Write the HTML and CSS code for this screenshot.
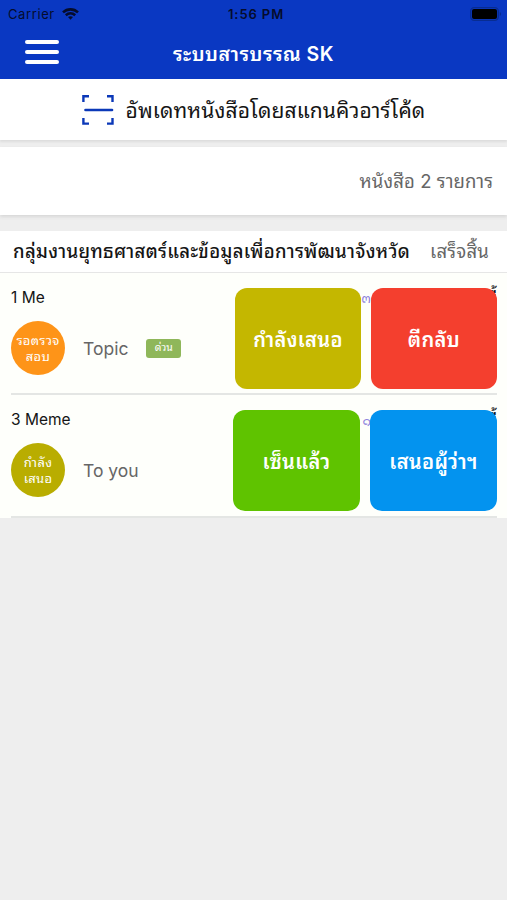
FILE: index.html
```
<!DOCTYPE html>
<html lang="th">
  <head>
    <meta charset="UTF-8" />
    <meta name="viewport" content="width=device-width, initial-scale=1.0" />
    <title>ระบบสารบรรณ SK</title>
    <link rel="stylesheet" href="styles.css" />
  </head>
  <body>
    <header>
      <div class="status-bar">
        <div class="carrier">
          <span>Carrier</span>
          <svg width="17" height="12" viewBox="0 0 17 12" fill="none" stroke="#050c2c" stroke-width="2.6">
            <path d="M1 4.4C5.3.4 11.7.4 16 4.4" />
            <path d="M3.8 7.2c2.8-2.4 6.6-2.4 9.4 0" />
            <path d="M6 9l2.5 2.7L11 9C9.5 7.9 7.5 7.9 6 9z" fill="#050c2c" stroke="none" />
          </svg>
        </div>
        <div class="time">1:56 PM</div>
        <svg class="battery" width="32" height="14" viewBox="0 0 32 14">
          <rect x=".7" y=".7" width="27.6" height="12.6" rx="3.5" fill="none" stroke="#082c91" stroke-width="1.3" />
          <rect x="2" y="2" width="25" height="10" rx="2" fill="#000" />
          <path d="M29.8 5v4c1.7-.6 1.7-3.4 0-4z" fill="#082c91" />
        </svg>
      </div>
      <div class="nav-bar">
        <button class="menu"><span></span><span></span><span></span></button>
        <h1>ระบบสารบรรณ SK</h1>
      </div>
    </header>

    <div class="scan">
      <svg width="32" height="30" viewBox="0 0 32 30" fill="none" stroke="#0b38b8" stroke-width="2.4">
        <path d="M1.4 7V1.3H7M25 1.3h5.5V7M30.5 23v5.6H25M7 28.6H1.400V23" />
        <path d="M3.500 15h26.500" stroke-width="2.6" stroke-linecap="round" />
      </svg>
      <span class="scan-text">อัพเดทหนังสือโดยสแกนคิวอาร์โค้ด</span>
    </div>

    <div class="summary"><span class="count">หนังสือ 2 รายการ</span></div>

    <section>
      <div class="group">
        <h2>กลุ่มงานยุทธศาสตร์และข้อมูลเพื่อการพัฒนาจังหวัด</h2>
        <span class="done">เสร็จสิ้น</span>
      </div>

      <div class="item">
        <div class="item-head">
          <span class="sender">1 Me</span>
          <span class="number">๑๓</span>
          <span class="date">วันนี้</span>
        </div>
        <div class="item-body">
          <div class="status orange">รอตรวจ<br />สอบ</div>
          <span class="topic">Topic</span>
          <span class="urgent">ด่วน</span>
        </div>
        <div class="actions">
          <button class="action olive">กำลังเสนอ</button>
          <button class="action red">ตีกลับ</button>
        </div>
      </div>

      <div class="item">
        <div class="item-head">
          <span class="sender">3 Meme</span>
          <span class="number">๑</span>
          <span class="date">วันนี้</span>
        </div>
        <div class="item-body">
          <div class="status dark-olive">กำลัง<br />เสนอ</div>
          <span class="topic">To you</span>
        </div>
        <div class="actions wide">
          <button class="action green">เซ็นแล้ว</button>
          <button class="action blue">เสนอผู้ว่าฯ</button>
        </div>
      </div>
    </section>
  </body>
</html>
```
FILE: styles.css
```
* {
  box-sizing: border-box;
}
body {
  margin: 0;
  background-color: #eee;
  color: #151515;
  font-family: Inter, "Noto Sans Thai Looped", "Noto Looped Thai", Loma, Garuda,
    Waree, Thonburi, sans-serif;
}
h1,
h2 {
  margin: 0;
}
button {
  border: 0;
  padding: 0;
  font-family: inherit;
}
header {
  height: 79px;
  background-color: #0a38c2;
}
.status-bar {
  display: grid;
  grid-template-columns: 1fr auto 1fr;
  align-items: center;
  height: 27px;
  padding: 0 5px 0 8px;
  color: #050c2c;
  font-size: 13px;
}
.carrier {
  display: flex;
  align-items: center;
  gap: 7px;
  letter-spacing: 0.6px;
}
.time {
  padding-left: 2px;
  font-weight: 600;
  letter-spacing: 0.9px;
}
.battery {
  justify-self: end;
}
.nav-bar {
  display: grid;
  grid-template-columns: 60px 1fr 60px;
  align-items: center;
  height: 50px;
}
.menu {
  display: flex;
  flex-direction: column;
  gap: 6px;
  width: 34px;
  margin-left: 25px;
  background: none;
}
.menu span {
  height: 4px;
  border-radius: 2px;
  background-color: #fff;
}
h1 {
  color: #fff;
  font-size: 19.5px;
  font-weight: 600;
  letter-spacing: 0.5px;
  text-align: center;
}
.scan {
  display: flex;
  justify-content: center;
  align-items: center;
  gap: 12px;
  height: 61px;
  background-color: #fff;
  box-shadow: 0 2px 2px #ddd;
  font-size: 21px;
  letter-spacing: 0.1px;
  white-space: nowrap;
}
.scan-text {
  padding-bottom: 3px;
}
.summary {
  display: flex;
  justify-content: flex-end;
  align-items: center;
  height: 68px;
  margin-top: 7px;
  padding: 0 14px 4px 0;
  background-color: #fff;
  box-shadow: 0 2px 3px #d8d8d8;
  color: #666;
  font-size: 18.5px;
  letter-spacing: 0.1px;
}
section {
  margin-top: 16px;
  background-color: #fefffb;
}
.group {
  display: flex;
  justify-content: space-between;
  align-items: center;
  height: 42px;
  padding: 0 18px 4px 13px;
  border-bottom: 1px solid #e6e6e6;
  background-color: #fff;
  white-space: nowrap;
}
h2 {
  font-size: 18.5px;
  font-weight: 500;
  letter-spacing: 0.33px;
}
.done {
  color: #666;
  font-size: 18.5px;
  letter-spacing: 0.2px;
}
.item {
  position: relative;
  height: 122px;
  margin: 0 10px 0 11px;
  border-bottom: 2px solid #e4e6e4;
}
.item:last-child {
  height: 123px;
}
.item-head {
  display: flex;
  height: 48px;
  padding-top: 12px;
  font-size: 15.5px;
  line-height: 26px;
}
.number {
  margin-left: auto;
  color: #8b80dc;
  font-size: 13px;
}
.date {
  width: 126px;
  margin-top: -1px;
  font-size: 16px;
  font-weight: 500;
  text-align: right;
}
.item-body {
  display: flex;
  align-items: center;
}
.status {
  display: flex;
  justify-content: center;
  align-items: center;
  width: 54px;
  height: 54px;
  border-radius: 50%;
  color: #fff;
  font-size: 13px;
  letter-spacing: 0.3px;
  line-height: 16px;
  text-align: center;
}
.topic {
  margin-left: 18px;
  color: #666;
  font-size: 17.5px;
}
.urgent {
  width: 35px;
  height: 19px;
  margin-left: 18px;
  border-radius: 3px;
  background-color: #8fb75a;
  color: #fff;
  font-size: 10.5px;
  line-height: 18px;
  text-align: center;
}
.actions {
  display: flex;
  gap: 10px;
  position: absolute;
  top: 15px;
  right: 0;
  width: 262px;
}
.wide {
  width: 264px;
}
.action {
  flex: 1;
  height: 101px;
  padding-bottom: 2px;
  border-radius: 12px;
  color: #fff;
  font-size: 20px;
  font-weight: 600;
  letter-spacing: 0.3px;
}
.orange {
  background-color: #fe9418;
}
.dark-olive {
  background-color: #b9ad00;
}
.olive {
  background-color: #c4b700;
}
.red {
  background-color: #f43f2e;
}
.green {
  background-color: #5fc300;
}
.blue {
  background-color: #0393ef;
}
```
